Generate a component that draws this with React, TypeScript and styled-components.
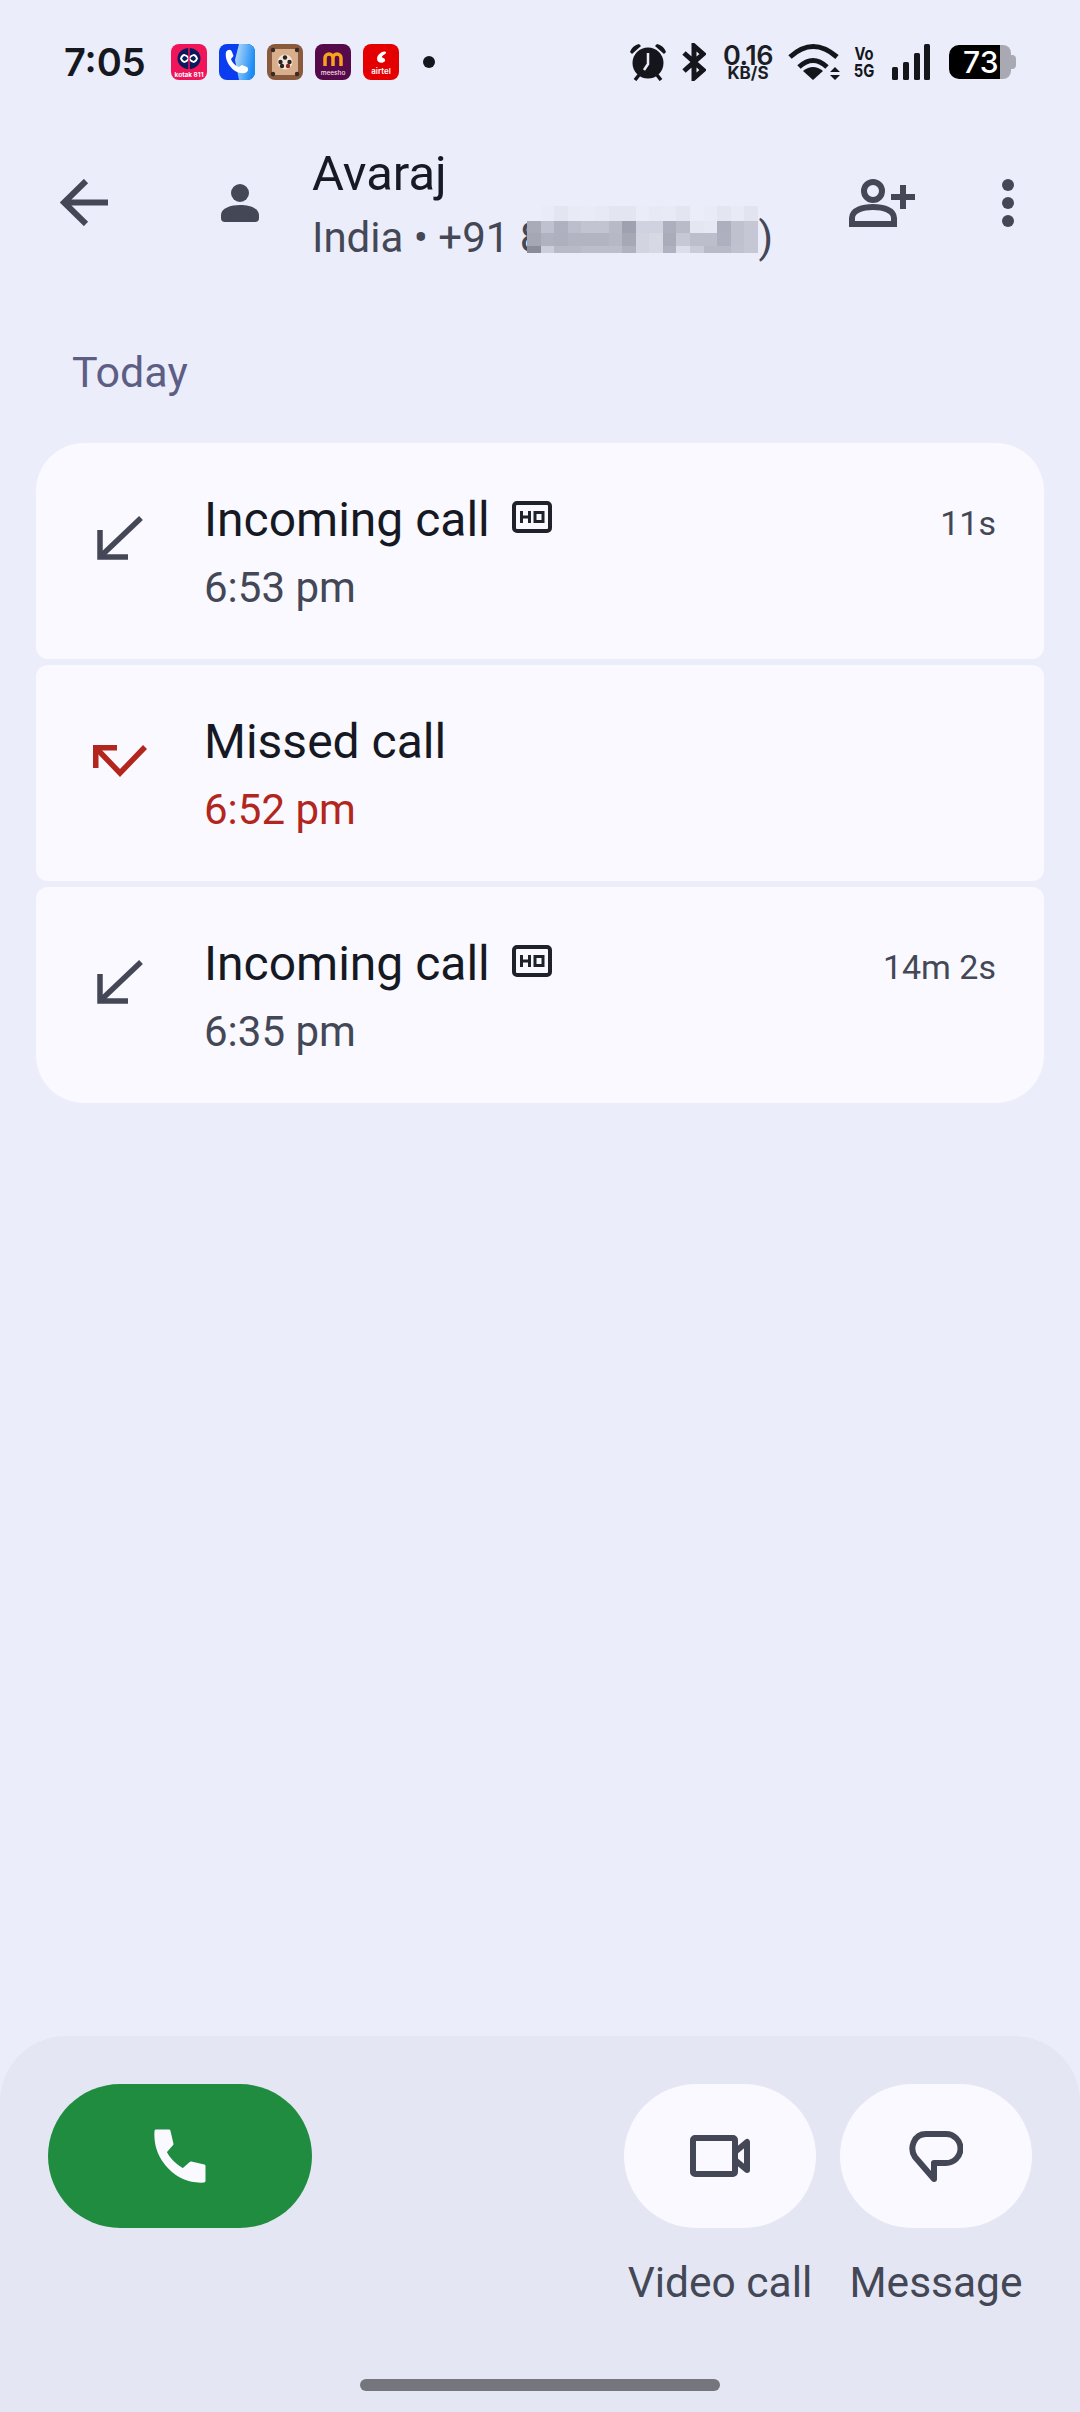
import * as React from "react";
import styled, { createGlobalStyle } from "styled-components";

const Global = createGlobalStyle`
  html, body {
    margin: 0;
    padding: 0;
    background: #ebeefa;
  }
  * {
    box-sizing: border-box;
  }
`;

const Page = styled.div`
  width: 1080px;
  height: 2412px;
  display: flex;
  flex-direction: column;
  background: #ebeefa;
  font-family: Roboto, "Liberation Sans", sans-serif;
  overflow: hidden;
`;

const StatusBar = styled.div`
  height: 124px;
  display: flex;
  align-items: center;
  padding: 0 64px;
`;

const Clock = styled.div`
  font-family: Inter, sans-serif;
  font-size: 38px;
  font-weight: 600;
  color: #16181f;
  width: 107px;
`;

const AppIcons = styled.div`
  display: flex;
  gap: 12px;
`;

const Dot = styled.div`
  width: 12px;
  height: 12px;
  border-radius: 50%;
  background: #14161c;
  margin-left: 24px;
`;

const StatusRight = styled.div`
  margin-left: auto;
  display: flex;
  align-items: center;
`;

const Slot = styled.div<{ $gap: number }>`
  display: flex;
  margin-left: ${(p) => p.$gap}px;
`;

const Speed = styled.div`
  display: flex;
  flex-direction: column;
  align-items: center;
  color: #1c1e26;
  font-family: Inter, sans-serif;
  font-weight: 600;
  width: 52px;
`;

const SpeedValue = styled.div`
  font-size: 27px;
  line-height: 21px;
  letter-spacing: -0.5px;
`;

const SpeedUnit = styled.div`
  font-size: 17px;
  line-height: 14px;
  font-weight: 700;
`;

const Network = styled.div`
  width: 20px;
  display: flex;
  flex-direction: column;
  align-items: center;
  font-family: Inter, sans-serif;
  font-weight: 700;
  font-size: 18px;
  line-height: 17px;
  color: #14161c;
  transform: scaleX(0.82);
`;

const Battery = styled.div`
  width: 62px;
  height: 34px;
  position: relative;
  margin-right: 5px;
  border-radius: 10px 8px 8px 10px;
  background: linear-gradient(90deg, #000 0 51px, #a9a9b4 51px 100%);
  color: #fff;
  font-family: Inter, sans-serif;
  font-weight: 500;
  font-size: 30px;
  display: flex;
  align-items: center;
  padding-left: 14px;
  line-height: 1;
  &::after {
    content: "";
    position: absolute;
    right: -5px;
    top: 10px;
    width: 5px;
    height: 14px;
    border-radius: 0 4px 4px 0;
    background: #a9a9b4;
  }
`;

const Header = styled.div`
  display: flex;
  height: 119px;
  margin-top: 19px;
  padding-left: 60px;
  align-items: center;
`;

const Avatar = styled.div`
  width: 38px;
  margin-left: 113px;
  margin-right: 53px;
  display: flex;
  justify-content: center;
`;

const Who = styled.div`
  display: flex;
  flex-direction: column;
  width: 480px;
`;

const Name = styled.div`
  font-size: 49px;
  line-height: 60px;
  margin-top: 1px;
  color: #171a24;
`;

const Sub = styled.div`
  position: relative;
  font-size: 42px;
  line-height: 48px;
  margin-top: 10px;
  color: #444756;
  white-space: nowrap;
`;

const Hidden = styled.span`
  display: inline-block;
  width: 215px;
`;

const Blur = styled.div`
  position: absolute;
  left: 215px;
  top: -8px;
  width: 231px;
  height: 47px;
  display: grid;
  grid-template-columns: repeat(17, 1fr);
  grid-template-rows: 15px 12px 13px 7px;
`;

const HeadActions = styled.div`
  margin-left: auto;
  display: flex;
  align-items: center;
  gap: 87px;
  padding-right: 66px;
`;

const Section = styled.div`
  font-size: 43px;
  line-height: 48px;
  color: #5e5e85;
  padding-left: 72px;
  margin-top: 86px;
`;

const List = styled.div`
  margin: 47px 36px 0;
  display: flex;
  flex-direction: column;
  gap: 6px;
`;

const Card = styled.div<{ $first?: boolean; $last?: boolean }>`
  height: 216px;
  background: #f9f9ff;
  border-radius: ${(p) => (p.$first ? "48px 48px" : "12px 12px")}
    ${(p) => (p.$last ? "48px 48px" : "12px 12px")};
  display: flex;
  padding: 0 48px 0 0;
`;

const CallIcon = styled.div<{ $top: number }>`
  width: 168px;
  padding-right: 0;
  display: flex;
  justify-content: center;
  align-items: flex-start;
  padding-top: ${(p) => p.$top}px;
`;

const CallBody = styled.div`
  flex: 1;
  padding-top: 47px;
`;

const TitleRow = styled.div`
  display: flex;
  align-items: center;
  gap: 22px;
`;

const Title = styled.div`
  font-size: 48px;
  line-height: 60px;
  color: #161923;
`;

const HdBadge = styled.div`
  display: flex;
  margin-bottom: 6px;
`;

const Time = styled.div<{ $missed?: boolean }>`
  font-size: 42px;
  line-height: 48px;
  margin-top: 14px;
  color: ${(p) => (p.$missed ? "#b3261e" : "#444756")};
`;

const Duration = styled.div`
  font-size: 34px;
  line-height: 44px;
  color: #444756;
  padding-top: 58px;
`;

const Sheet = styled.div`
  margin-top: auto;
  height: 376px;
  background: #e4e7f3;
  border-radius: 66px 66px 0 0;
  padding: 48px 48px 0;
  position: relative;
`;

const Actions = styled.div`
  display: flex;
`;

const CallButton = styled.div`
  width: 264px;
  height: 144px;
  border-radius: 72px;
  background: #208c40;
  display: flex;
  align-items: center;
  justify-content: center;
`;

const Side = styled.div`
  margin-left: auto;
  display: flex;
  gap: 24px;
`;

const Action = styled.div`
  width: 192px;
  display: flex;
  flex-direction: column;
  align-items: center;
`;

const Round = styled.div`
  width: 192px;
  height: 144px;
  border-radius: 72px;
  background: #f9f9ff;
  display: flex;
  align-items: center;
  justify-content: center;
`;

const Label = styled.div`
  font-size: 42.5px;
  line-height: 48px;
  margin-top: 31px;
  color: #444756;
  white-space: nowrap;
`;

const HomeBar = styled.div`
  position: absolute;
  left: 360px;
  bottom: 21px;
  width: 360px;
  height: 12px;
  border-radius: 6px;
  background: #74757d;
`;

const blurRows = [
  "ebeefa e9ecf8 e3e5f0 e8eaf6 e9ebf7 e7e9f5 e3e5f1 e3e5f1 eaecf8 e7e9f5 e8eaf6 e3e5f1 ebedf9 e9ebf7 e3e5f1 e8eaf6 e2e4f0",
  "a9abb8 bfc1ce afb1c0 bcbecc c2c4d1 c2c4d1 b8bac8 9fa1b0 d0d2df d0d2df adafbe b9bbc9 e4e6f2 e6e8f4 adafbe bfc1ce c5c7d4",
  "a5a7b5 b0b2c0 aeb0be b2b4c2 b2b4c2 b2b4c2 b6b8c6 a6a8b6 d2d4e0 d6d8e4 aaacba c6c8d5 bcbecc bcbecc aeb0bf bfc1ce c5c7d4",
  "8a8c9a ccced9 b8bac8 b8bac8 bcbecb bcbecb bcbecb b0b2c0 d2d4e0 d6d8e4 b0b2c0 dcdeea c9cbd8 b8bac8 b8bac8 c0c2cf c5c7d4",
];

function Pixelated() {
  const cells = blurRows.flatMap((row) => row.split(" "));
  return (
    <Blur>
      {cells.map((c, i) => (
        <div key={i} style={{ background: `#${c}` }} />
      ))}
    </Blur>
  );
}

function HdIcon() {
  return (
    <HdBadge>
      <svg width="40" height="32" viewBox="0 0 40 32">
        <rect x="2" y="2" width="36" height="28" rx="3" fill="none" stroke="#20222b" strokeWidth="4" />
        <path d="M9.500 10v12M17.500 10v12M9.500 16h8" stroke="#20222b" strokeWidth="3" fill="none" />
        <rect x="23" y="11.500" width="8" height="9" fill="none" stroke="#20222b" strokeWidth="3" />
      </svg>
    </HdBadge>
  );
}

function IncomingIcon() {
  return (
    <svg width="46" height="44" viewBox="0 0 46 44" fill="none" stroke="#444756" strokeWidth="5.5">
      <path d="M44 2 4 40" />
      <path d="M3 14v27h28" />
    </svg>
  );
}

function MissedIcon() {
  return (
    <svg width="54" height="32" viewBox="0 0 54 32" fill="none" stroke="#b3261e" strokeWidth="5.5">
      <path d="M2.750 23V2.750H24" />
      <path d="M3 3l24 25L52 2" />
    </svg>
  );
}

function KotakLogo() {
  return (
    <svg width="36" height="36" viewBox="0 0 36 36">
      <rect width="36" height="36" rx="8" fill="#f0145a" />
      <ellipse cx="18" cy="14.500" rx="11.500" ry="10.500" fill="#0a1a5c" />
      <path d="M10 14.500c2-5 5-4 8 0s6 5 8 0c-2-5-5-4-8 0s-6 5-8 0Z" fill="none" stroke="#fff" strokeWidth="2" />
      <path d="M18 4v21" stroke="#f0145a" strokeWidth="1.500" />
      <text x="18" y="33" fontFamily="Inter, sans-serif" fontWeight="700" fontSize="6.500" textAnchor="middle" fill="#fff">kotak 811</text>
    </svg>
  );
}

function TruecallerLogo() {
  return (
    <svg width="36" height="36" viewBox="0 0 36 36">
      <defs>
        <linearGradient id="tc" x1="0" y1="0" x2="1" y2="0.300">
          <stop offset="0" stopColor="#bfe0fb" />
          <stop offset="1" stopColor="#1c8cf5" />
        </linearGradient>
      </defs>
      <rect width="36" height="36" rx="8" fill="#0a3cf0" />
      <path d="M20 0h8a8 8 0 0 1 8 8v20a8 8 0 0 1-8 8h-8l-4-20Z" fill="url(#tc)" />
      <path d="M7 8c2-3 5-3 6 0l1.500 4-2.500 3c1 3 4 7 8 8l3-2 5 2c2 2 1 5-2 6C15 31 5 18 7 8Z" fill="#fff" />
    </svg>
  );
}

function CarromLogo() {
  return (
    <svg width="36" height="36" viewBox="0 0 36 36">
      <rect width="36" height="36" rx="8" fill="#8a5a3c" />
      <rect x="5" y="5" width="26" height="26" rx="1" fill="#d8ae8c" />
      <circle cx="18" cy="18" r="7.500" fill="#f4e6d8" />
      <circle cx="18" cy="13.500" r="2.200" fill="#2c2320" />
      <circle cx="13.500" cy="18" r="2.200" fill="#2c2320" />
      <circle cx="22.500" cy="18" r="2.200" fill="#2c2320" />
      <circle cx="15" cy="22" r="2.200" fill="#2c2320" />
      <circle cx="21" cy="22" r="2.200" fill="#8b2b22" />
      <circle cx="6" cy="6" r="2.200" fill="#352a24" />
      <circle cx="30" cy="6" r="2.200" fill="#352a24" />
      <circle cx="6" cy="30" r="2.200" fill="#352a24" />
      <circle cx="30" cy="30" r="2.200" fill="#352a24" />
    </svg>
  );
}

function MeeshoLogo() {
  return (
    <svg width="36" height="36" viewBox="0 0 36 36">
      <rect width="36" height="36" rx="8" fill="#570a4a" />
      <path d="M10 22v-8a4 4 0 0 1 8 0v8M18 14a4 4 0 0 1 8 0v8" fill="none" stroke="#f6a21c" strokeWidth="3.500" />
      <text x="18" y="31" fontFamily="Inter, sans-serif" fontWeight="500" fontSize="6.500" textAnchor="middle" fill="#f0dfe9">meesho</text>
    </svg>
  );
}

function AirtelLogo() {
  return (
    <svg width="36" height="36" viewBox="0 0 36 36">
      <rect width="36" height="36" rx="8" fill="#e40000" />
      <path d="M14 15c0-5 7-9 9-7 1 2-4 3-4 5 0 1 4 1 3 4-2 3-8 2-8-2Z" fill="#fff" />
      <text x="18" y="30" fontFamily="Inter, sans-serif" fontWeight="600" fontSize="8" textAnchor="middle" fill="#fff">airtel</text>
    </svg>
  );
}

function App(): React.ReactElement {
  return (
    <Page>
      <Global />
      <StatusBar>
        <Clock>7:05</Clock>
        <AppIcons>
          <KotakLogo />
          <TruecallerLogo />
          <CarromLogo />
          <MeeshoLogo />
          <AirtelLogo />
        </AppIcons>
        <Dot />
        <StatusRight>
          <svg width="38" height="38" viewBox="0 0 38 38" fill="#14161c">
            <circle cx="19" cy="20" r="15.500" />
            <path d="M1 9C3 4 6 2 10 1l2 2-9 8ZM37 9c-2-5-5-7-9-8l-2 2 9 8Z" />
            <path d="M10 32l-4 5M28 32l4 5" stroke="#14161c" strokeWidth="3.500" />
            <path d="M19 10v11l-4 6" fill="none" stroke="#ebeefa" strokeWidth="2.500" />
          </svg>
          <Slot $gap={15}>
            <svg width="24" height="38" viewBox="0 0 24 38" fill="none" stroke="#14161c" strokeWidth="5">
              <path d="M2 10 21 27l-9 8V3l9 8L2 28" />
            </svg>
          </Slot>
          <Slot $gap={16}>
            <Speed>
              <SpeedValue>0.16</SpeedValue>
              <SpeedUnit>KB/S</SpeedUnit>
            </Speed>
          </Slot>
          <Slot $gap={14}>
            <svg width="54" height="38" viewBox="0 0 54 38" fill="none" stroke="#14161c" strokeWidth="5">
              <path d="M2 14Q25-7 49 14M11 24Q25 11 39 24" />
              <path d="M15 28l10 9 10-9Q25 20 15 28Z" fill="#14161c" stroke="none" />
              <path d="M42 29l5-5 5 5ZM42 32l5 5 5-5Z" fill="#14161c" stroke="none" />
            </svg>
          </Slot>
          <Slot $gap={12}>
            <Network>
              <div>Vo</div>
              <div>5G</div>
            </Network>
          </Slot>
          <Slot $gap={18}>
            <svg width="38" height="36" viewBox="0 0 38 36" fill="#14161c">
              <rect x="0" y="23" width="6" height="13" rx="1.500" />
              <rect x="11" y="18" width="6" height="18" rx="1.500" />
              <rect x="22" y="9" width="6" height="27" rx="1.500" />
              <rect x="32" y="0" width="6" height="36" rx="1.500" />
            </svg>
          </Slot>
          <Slot $gap={19}>
            <Battery>73</Battery>
          </Slot>
        </StatusRight>
      </StatusBar>
      <Header>
        <svg width="48" height="47" viewBox="0 0 48 47" fill="none" stroke="#444756" strokeWidth="6">
          <path d="M48 23.500H5M26 2 4 23.500 26 45" />
        </svg>
        <Avatar>
          <svg width="38" height="38" viewBox="0 0 38 38" fill="#444756">
            <circle cx="19" cy="9" r="9" />
            <path d="M0 34v-3c0-7 10-10 19-10s19 3 19 10v3a4 4 0 0 1-4 4H4a4 4 0 0 1-4-4Z" />
          </svg>
        </Avatar>
        <Who>
          <Name>Avaraj</Name>
          <Sub>
            India • +91 8<Hidden />)
            <Pixelated />
          </Sub>
        </Who>
        <HeadActions>
          <svg width="66" height="48" viewBox="0 0 66 48" fill="none" stroke="#444756" strokeWidth="6">
            <circle cx="24" cy="12" r="9" />
            <path d="M3 45v-6c0-8 11-11 21-11s21 3 21 11v6Z" />
            <path d="M42 18h24M54 6v24" />
          </svg>
          <svg width="12" height="48" viewBox="0 0 12 48" fill="#444756">
            <circle cx="6" cy="6" r="6" />
            <circle cx="6" cy="24" r="6" />
            <circle cx="6" cy="42" r="6" />
          </svg>
        </HeadActions>
      </Header>
      <Section>Today</Section>
      <List>
        <Card $first>
          <CallIcon $top={73}><IncomingIcon /></CallIcon>
          <CallBody>
            <TitleRow><Title>Incoming call</Title><HdIcon /></TitleRow>
            <Time>6:53 pm</Time>
          </CallBody>
          <Duration>11s</Duration>
        </Card>
        <Card>
          <CallIcon $top={80}><MissedIcon /></CallIcon>
          <CallBody>
            <TitleRow><Title>Missed call</Title></TitleRow>
            <Time $missed>6:52 pm</Time>
          </CallBody>
        </Card>
        <Card $last>
          <CallIcon $top={73}><IncomingIcon /></CallIcon>
          <CallBody>
            <TitleRow><Title>Incoming call</Title><HdIcon /></TitleRow>
            <Time>6:35 pm</Time>
          </CallBody>
          <Duration>14m 2s</Duration>
        </Card>
      </List>
      <Sheet>
        <Actions>
          <CallButton>
            <svg width="54" height="54" viewBox="0 0 54 54" fill="#f9f9ff" stroke="#f9f9ff" strokeWidth="3" strokeLinejoin="round">
              <path d="M3 2h13l3 13-7 8c4 8 11 14 18 18l8-7 13 3v15C24 54 1 30 3 2Z" />
            </svg>
          </CallButton>
          <Side>
            <Action>
              <Round>
                <svg width="60" height="42" viewBox="0 0 60 42" fill="none" stroke="#444756" strokeWidth="6" strokeLinejoin="round">
                  <rect x="3" y="3" width="42" height="36" rx="2" />
                  <path d="M45 17 57 7v28L45 25" />
                </svg>
              </Round>
              <Label>Video call</Label>
            </Action>
            <Action>
              <Round>
                <svg width="54" height="51" viewBox="0 0 54 51" fill="none" stroke="#444756" strokeWidth="6" strokeLinejoin="round">
                  <path d="M17 3h20a14.500 14.500 0 0 1 0 29H25v16L6 26C0 17 5 3 17 3Z" />
                </svg>
              </Round>
              <Label>Message</Label>
            </Action>
          </Side>
        </Actions>
        <HomeBar />
      </Sheet>
    </Page>
  );
}

export default App;
